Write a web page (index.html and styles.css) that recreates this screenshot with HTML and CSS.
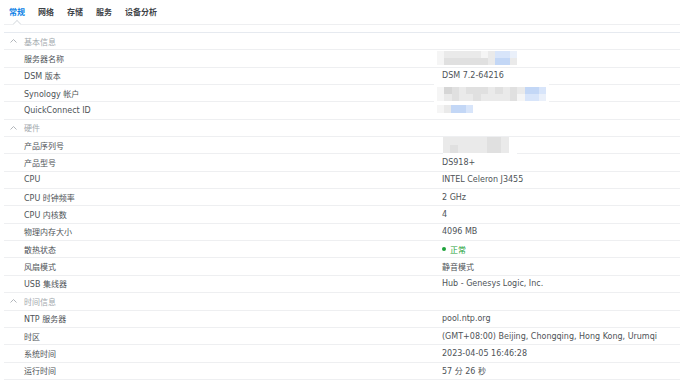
FILE: index.html
```html
<!DOCTYPE html>
<html lang="zh-CN">
<head>
    <meta charset="UTF-8">
    <title>信息中心</title>
    <link rel="stylesheet" href="styles.css">
</head>
<body>
    <main class="panel">
        <nav class="tabs">
            <span class="tab active">常规</span>
            <span class="tab">网络</span>
            <span class="tab">存储</span>
            <span class="tab">服务</span>
            <span class="tab">设备分析</span>
        </nav>

        <section class="table">
            <div class="group">
                <svg class="chevron" viewBox="0 0 7 4"><polyline points="0.5,3.5 3.5,0.5 6.5,3.5"/></svg>
                <span>基本信息</span>
            </div>
            <div class="row">
                <span class="label">服务器名称</span>
                <span class="value">
                    <span class="redact r-name">
                        <span class="mosaic cols-11">
                            <i class="g0"></i><i class="g1"></i><i class="g1"></i><i class="g1"></i><i class="g1"></i><i class="g1"></i><i class="g0"></i><i class="g1"></i><i class="b1"></i><i class="b1"></i><i class="b0"></i>
                            <i class="g0"></i><i class="g2"></i><i class="g2"></i><i class="g2"></i><i class="g2"></i><i class="g2"></i><i class="g2"></i><i class="g1"></i><i class="b2"></i><i class="b2"></i><i class="g1"></i>
                        </span>
                    </span>
                </span>
            </div>
            <div class="row">
                <span class="label">DSM 版本</span>
                <span class="value">DSM 7.2-64216</span>
            </div>
            <div class="row">
                <span class="label">Synology 帐户</span>
                <span class="value">
                    <span class="redact r-account">
                        <span class="mosaic cols-15">
                            <i class="g0"></i><i class="g3"></i><i class="g2"></i><i class="g1"></i><i class="g2"></i><i class="g2"></i><i class="g2"></i><i class="g1"></i><i class="g2"></i><i class="g1"></i><i class="g2"></i><i class="g1"></i><i class="b2"></i><i class="b2"></i><i class="b1"></i>
                            <i class="g0"></i><i class="g1"></i><i class="g2"></i><i class="g1"></i><i class="g1"></i><i class="g2"></i><i class="g1"></i><i class="g1"></i><i class="g1"></i><i class="g1"></i><i class="g2"></i><i class="g0"></i><i class="b1"></i><i class="b1"></i><i class="b0"></i>
                        </span>
                    </span>
                </span>
            </div>
            <div class="row">
                <span class="label">QuickConnect ID</span>
                <span class="value">
                    <span class="redact r-qc">
                        <span class="mosaic cols-5 tall">
                            <i class="g0"></i><i class="g1"></i><i class="b2"></i><i class="b2"></i><i class="b1"></i>
                        </span>
                    </span>
                </span>
            </div>

            <div class="group">
                <svg class="chevron" viewBox="0 0 7 4"><polyline points="0.5,3.5 3.5,0.5 6.5,3.5"/></svg>
                <span>硬件</span>
            </div>
            <div class="row">
                <span class="label">产品序列号</span>
                <span class="value">
                    <span class="redact r-serial">
                        <span class="mosaic cols-9 tall">
                            <i class="g1"></i><i class="g1"></i><i class="g1"></i><i class="g1"></i><i class="g1"></i><i class="g1"></i><i class="g2"></i><i class="g2"></i><i class="g1"></i>
                            <i class="g1"></i><i class="g2"></i><i class="g1"></i><i class="g1"></i><i class="g1"></i><i class="g1"></i><i class="g2"></i><i class="g2"></i><i class="g1"></i>
                        </span>
                    </span>
                </span>
            </div>
            <div class="row">
                <span class="label">产品型号</span>
                <span class="value">DS918+</span>
            </div>
            <div class="row">
                <span class="label">CPU</span>
                <span class="value">INTEL Celeron J3455</span>
            </div>
            <div class="row">
                <span class="label">CPU 时钟频率</span>
                <span class="value">2 GHz</span>
            </div>
            <div class="row">
                <span class="label">CPU 内核数</span>
                <span class="value">4</span>
            </div>
            <div class="row">
                <span class="label">物理内存大小</span>
                <span class="value">4096 MB</span>
            </div>
            <div class="row">
                <span class="label">散热状态</span>
                <span class="value status-ok"><span class="dot"></span>正常</span>
            </div>
            <div class="row">
                <span class="label">风扇模式</span>
                <span class="value">静音模式</span>
            </div>
            <div class="row">
                <span class="label">USB 集线器</span>
                <span class="value">Hub - Genesys Logic, Inc.</span>
            </div>

            <div class="group">
                <svg class="chevron" viewBox="0 0 7 4"><polyline points="0.5,3.5 3.5,0.5 6.5,3.5"/></svg>
                <span>时间信息</span>
            </div>
            <div class="row">
                <span class="label">NTP 服务器</span>
                <span class="value">pool.ntp.org</span>
            </div>
            <div class="row">
                <span class="label">时区</span>
                <span class="value">(GMT+08:00) Beijing, Chongqing, Hong Kong, Urumqi</span>
            </div>
            <div class="row">
                <span class="label">系统时间</span>
                <span class="value">2023-04-05 16:46:28</span>
            </div>
            <div class="row">
                <span class="label">运行时间</span>
                <span class="value">57 分 26 秒</span>
            </div>
        </section>
    </main>
</body>
</html>
```

FILE: styles.css
```css
/* Colores base */
:root {
    --text: #4e5357;
    --muted: #a2a8ad;
    --accent: #0a7fe6;
    --line: #eeeff1;
    --line-strong: #e6eaf0;
    --ok: #1ea23a;
}

* {
    margin: 0;
    padding: 0;
    box-sizing: border-box;
}

body {
    background: #ffffff;
    color: var(--text);
    font-family: "DejaVu Sans", "Noto Sans CJK SC", sans-serif;
    font-size: 8px;
}

.panel {
    padding-left: 4px;
}

/* Pestañas */
.tabs {
    display: flex;
    gap: 13px;
    height: 25px;
    padding: 2px 0 0 5px;
    align-items: center;
    border-bottom: 1px solid var(--line);
}

.tab {
    position: relative;
    font-weight: bold;
    color: #3d4246;
    line-height: 10px;
}

.tab.active {
    color: var(--accent);
}

/* pequeña muesca bajo la pestaña activa */
.tab.active::after {
    content: "";
    position: absolute;
    left: 5px;
    bottom: -9px;
    width: 5px;
    height: 5px;
    background: #ffffff;
    border-top: 1px solid #dfe2e5;
    border-left: 1px solid #dfe2e5;
    transform: rotate(45deg);
}

/* Tabla */
.table {
    margin-top: 7px;
    border-top: 1px solid var(--line-strong);
}

.group,
.row {
    height: 17.35px;
    border-bottom: 1px solid var(--line);
}

.group {
    display: flex;
    align-items: center;
    gap: 7px;
    padding-left: 6px;
    color: var(--muted);
}

.chevron {
    width: 7px;
    height: 4px;
    fill: none;
    stroke: #a9aeb3;
    stroke-width: 0.9;
}

.row {
    display: grid;
    grid-template-columns: 418px 1fr;
    padding-left: 20px;
}

.label,
.value {
    display: flex;
    align-items: center;
    white-space: nowrap;
}

.value {
    position: relative;
}

.status-ok {
    color: var(--ok);
    gap: 4px;
}

.dot {
    width: 4px;
    height: 4px;
    border-radius: 50%;
    background: var(--ok);
}

/* Datos ocultos (mosaico) */
.redact {
    position: absolute;
    background: #ffffff;
}

.r-name {
    top: 1px;
    left: -5px;
}

.r-account {
    top: -1px;
    left: -8px;
    padding: 3px 3px 2px;
}

.r-qc {
    top: -1px;
    left: -8px;
    padding: 4px 60px 4px 3px;
}

.r-serial {
    top: 0;
    left: 1px;
    padding: 0 8px 1px 0;
}

.mosaic {
    display: grid;
    grid-auto-rows: 7px;
}

.mosaic.tall {
    grid-auto-rows: 8px;
}

.cols-5 { grid-template-columns: repeat(5, 7.2px); }
.cols-9 { grid-template-columns: repeat(9, 7.3px); }
.cols-11 { grid-template-columns: repeat(11, 7.3px); }
.cols-15 { grid-template-columns: repeat(15, 7.3px); }

.mosaic i { display: block; }
.g0 { background: #f5f5f5; }
.g1 { background: #eaeaea; }
.g2 { background: #e0e0e0; }
.g3 { background: #d6d6d6; }
.b0 { background: #eaf0fa; }
.b1 { background: #d8e5fa; }
.b2 { background: #c3d7f6; }
```
